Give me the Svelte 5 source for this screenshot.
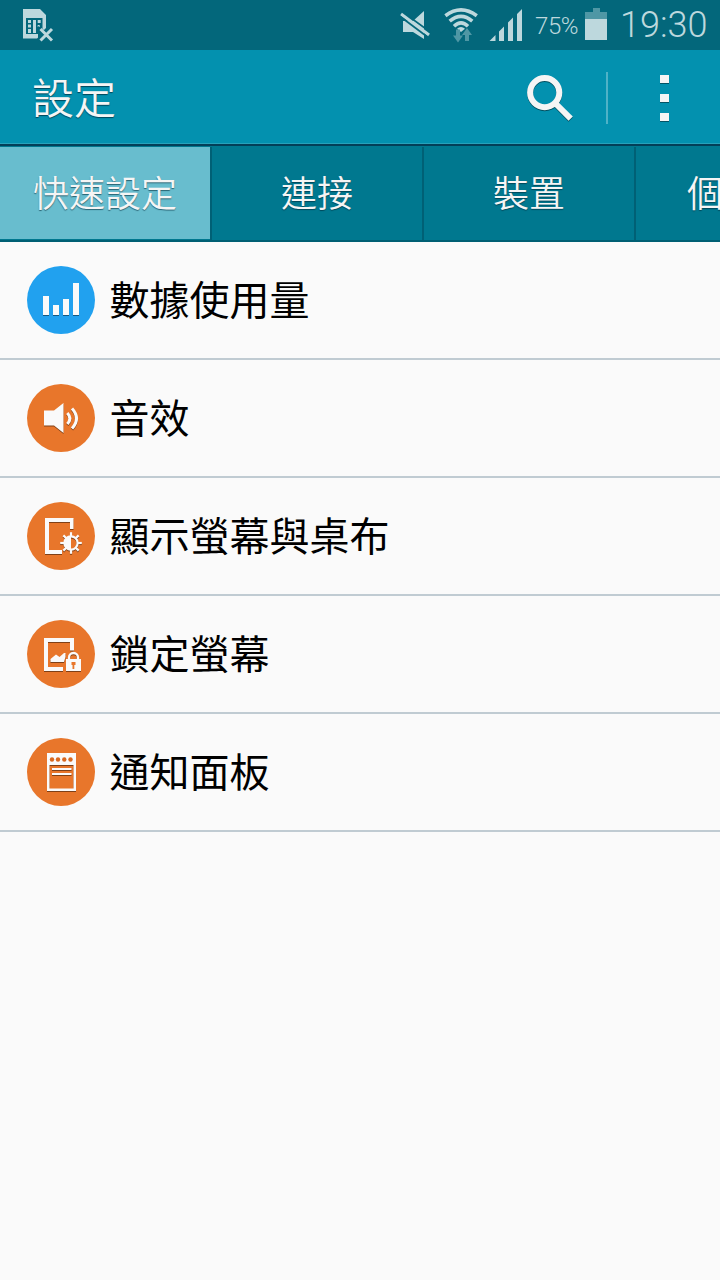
<script>
  const tabs = ['快速設定', '連接', '裝置', '個人化'];
  let selected = $state(0);
  const items = [
    { icon: 'data', label: '數據使用量', color: '#21a1ef' },
    { icon: 'sound', label: '音效', color: '#e8762b' },
    { icon: 'display', label: '顯示螢幕與桌布', color: '#e8762b' },
    { icon: 'lock', label: '鎖定螢幕', color: '#e8762b' },
    { icon: 'panel', label: '通知面板', color: '#e8762b' }
  ];
  const teeth = [0, 45, 90, 135, 180, 225, 270, 315];
</script>

<div class="screen">
  <div class="status">
    <svg class="sim" width="32" height="34" viewBox="22 8 32 34">
      <path d="M23 9H40L46 15V28L44 30L40 28L38 32L41 35L37 38.500H23Z" fill="#bdd8dd" />
      <path d="M26 18H42.500V34H26Z" fill="#03677b" />
      <path d="M28 20h3v3h-3zM28 24.500h3v3h-3zM28 29h3v4h-3zM33 20h3v13h-3zM37.700 20h3v3h-3zM37.700 25h2v2h-2z" fill="#bdd8dd" />
      <path d="M38 26L46 32L53 26V42H38Z" fill="#03677b" />
      <path d="M40.500 29L52 40.500M52 29L40.500 40.500" fill="none" stroke="#bdd8dd" stroke-width="3" />
    </svg>
    <div class="system">
      <svg width="32" height="32" viewBox="399 9 32 32">
        <path d="M403 21h10l11-10v28l-11-7h-10z" fill="#bdd8dd" />
        <path d="M402 11.500L431 32.500" fill="none" stroke="#03677b" stroke-width="1.600" />
        <path d="M401 14L429 35" fill="none" stroke="#bdd8dd" stroke-width="3.200" />
        <path d="M399.500 16L427.500 37" fill="none" stroke="#03677b" stroke-width="1.600" />
      </svg>
      <svg class="wifi" width="36" height="36" viewBox="443 7 36 36">
        <g fill="none" stroke="#bdd8dd" stroke-width="3.600">
          <path d="M445.400 15.800Q461 4 476.800 15.800" />
          <path d="M449.700 21.200Q461 11.700 472.300 21.200" />
          <path d="M454 26.200Q461 19.700 468 26.200" />
        </g>
        <path d="M457 28.800Q461 25 465 28.800L461 32Z" fill="#bdd8dd" />
        <path d="M456 29.500h4v6h3l-5 7l-5-7h3zM465 41h4v-6h3l-5-7l-5 7h3z" fill="#4f97a5" />
      </svg>
      <svg class="signal" width="34" height="34" viewBox="489 8 34 34">
        <path d="M489.500 41L495.500 35V41ZM499 31.500L504 26.500V41H499ZM508 22.500L513 17.500V41H508ZM517 14L522 9V41H517Z" fill="#bdd8dd" />
      </svg>
      <span class="percent">75%</span>
      <svg class="battery" width="22" height="32" viewBox="0 0 22 32">
        <path d="M8 0h7v4h7v7H0V4h8z" fill="#4f97a5" />
        <path d="M0 11h22v21H0z" fill="#bdd8dd" />
      </svg>
      <span class="clock">19:30</span>
    </div>
  </div>

  <header>
    <h1>設定</h1>
    <div class="actions">
      <svg class="search shadow" width="48" height="48" viewBox="526 74 48 48">
        <circle cx="544.700" cy="92.600" r="14.600" fill="none" stroke="#f5f5f5" stroke-width="6" />
        <path d="M555 103L570.700 118.700" stroke="#f5f5f5" stroke-width="6" />
      </svg>
      <div class="divider"></div>
      <svg class="more" width="9" height="50" viewBox="0 -2 9 50">
        <path d="M0 1h9v8H0zM0 20h9v8H0zM0 39h9v8H0z" fill="#045365" />
        <path d="M0 0h9v8H0zM0 19h9v8H0zM0 38h9v8H0z" fill="#f5f5f5" />
      </svg>
    </div>
  </header>

  <nav>
    {#each tabs as tab, i}
      <button class:active={selected === i} onclick={() => (selected = i)}><span>{tab}</span></button>
    {/each}
  </nav>

  <ul>
    {#each items as item}
      <li>
        <svg class="badge" width="68" height="68" viewBox="0 0 68 68">
          <circle cx="34" cy="34" r="34" fill={item.color} />
          <g class="shadow">
            {#if item.icon === 'data'}
              <path d="M16 30h6v19h-6zM26 39h6v10h-6zM36 33h6v16h-6zM46 17h6v32h-6z" fill="#fafafa" />
            {:else if item.icon === 'sound'}
              <path d="M17 26.500h10L36.500 19v30L27 41.500H17z" fill="#fafafa" />
              <path d="M40.300 29Q45.500 34.500 40.300 40M45 24.500Q54 34.500 45 44.500" fill="none" stroke="#fafafa" stroke-width="3" />
            {:else if item.icon === 'display'}
              <path d="M18 16H46.500V27H43V20H22V48H35V52H18Z" fill="#fafafa" />
              <circle cx="44" cy="41" r="6.600" fill="none" stroke="#fafafa" stroke-width="2.200" />
              <path d="M44 34A7 7 0 0 0 44 48Z" fill="#fafafa" />
              {#each teeth as angle}
                <path d="M44 34V30.200" stroke="#fafafa" stroke-width="2.200" transform={`rotate(${angle} 44 41)`} />
              {/each}
            {:else if item.icon === 'lock'}
              <path d="M17 18H47V30.500H43V22H21V47H36V51H17Z" fill="#fafafa" />
              <path d="M23.500 42V39L29 34.500L32.500 37L37 33H38.500V37L37 42Z" fill="#fafafa" />
              <path d="M39 39h15v12H39z" fill="#fafafa" />
              <path d="M42 39V37.500A4.500 4.500 0 0 1 51 37.500V39" fill="none" stroke="#fafafa" stroke-width="2.300" />
              <path d="M44.500 42h4v3h-1.200v4h-1.800v-4h-1z" fill="#e8762b" />
            {:else}
              <path fill-rule="evenodd" d="M20 15H49V53H20ZM22.500 27V50.500H46.500V27Z" fill="#fafafa" />
              <path d="M25 31H44.500M25 36H44.500" stroke="#fafafa" stroke-width="2" />
              <g fill="#d9671f">
                <circle cx="25" cy="21.500" r="2.200" />
                <circle cx="31" cy="21.500" r="2.200" />
                <circle cx="37.300" cy="21.500" r="2.200" />
                <circle cx="43.500" cy="21.500" r="2.200" />
              </g>
            {/if}
          </g>
        </svg>
        <span>{item.label}</span>
      </li>
    {/each}
  </ul>
</div>

<style>
  :global(body) {
    background: #fafafa;
  }
  .screen {
    width: 720px;
    height: 1280px;
    overflow: hidden;
    background: #fafafa;
    font-family: Roboto, 'Noto Sans CJK TC', sans-serif;
  }
  svg {
    display: block;
    flex: none;
  }
  .status {
    display: flex;
    justify-content: space-between;
    align-items: center;
    height: 50px;
    box-sizing: border-box;
    padding: 0 14px 0 22px;
    background: #03677b;
    color: #bdd8dd;
  }
  .system {
    display: flex;
    align-items: center;
  }
  .wifi {
    margin-left: 12px;
  }
  .signal {
    margin-left: 10px;
  }
  .percent {
    width: 50px;
    box-sizing: border-box;
    padding: 2px 0 0 12px;
    margin-right: 12px;
    font-size: 24px;
    font-weight: 350;
    line-height: 30px;
    white-space: nowrap;
    letter-spacing: -0.4px;
  }
  .battery {
    margin-bottom: 2px;
  }
  .clock {
    width: 86px;
    margin-left: 13px;
    font-size: 36px;
    font-weight: 300;
    line-height: 48px;
    white-space: nowrap;
  }
  header {
    display: flex;
    justify-content: space-between;
    height: 96px;
    box-sizing: border-box;
    padding: 0 51px 0 32px;
    background: #0391af;
    border-bottom: 2px solid #033f58;
    box-shadow: inset 0 -1px #27a2bb;
  }
  h1 {
    margin: 0;
    padding-top: 3px;
    font-size: 42px;
    font-weight: 350;
    line-height: 94px;
    color: #f5f5f5;
    text-shadow: 0 1px 1px rgba(0, 40, 55, 0.7);
  }
  .actions {
    display: flex;
    align-items: center;
    padding-top: 2px;
  }
  .divider {
    width: 2px;
    height: 52px;
    margin: 0 52px 0 32px;
    background: #4fb2c7;
  }
  .shadow {
    filter: drop-shadow(0 1px 0.5px rgba(0, 0, 0, 0.45));
  }
  nav {
    display: flex;
    height: 96px;
    box-sizing: border-box;
    overflow: hidden;
    padding-top: 1px;
    background: #00788f;
    border-bottom: 2px solid #005f73;
  }
  button {
    flex: 0 0 212px;
    height: 93px;
    box-sizing: border-box;
    margin: 0;
    padding: 0 0 1px;
    border: 0;
    border-right: 2px solid #006075;
    background: transparent;
    color: #f5f5f5;
    font: 350 36px/88px 'Noto Sans CJK TC', sans-serif;
    text-shadow: 0 1px 1px rgba(0, 40, 55, 0.6);
  }
  button span {
    display: block;
    height: 92px;
  }
  button.active span {
    background: #68bdce;
  }
  ul {
    margin: 0;
    padding: 0;
    list-style: none;
  }
  li {
    display: flex;
    align-items: center;
    gap: 15px;
    height: 118px;
    box-sizing: border-box;
    padding-left: 27px;
    border-bottom: 2px solid #c0cbd2;
    color: #000;
    font-size: 40px;
    line-height: 60px;
  }
  li span {
    padding-top: 3px;
    margin-left: -0.5px;
  }
</style>
